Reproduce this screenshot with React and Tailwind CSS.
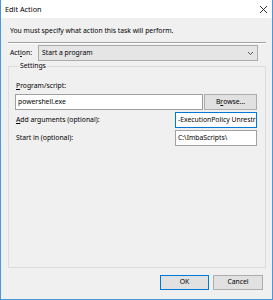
import React from "react";

// Task Scheduler "Edit Action" dialog, scaled down
const FONT = { fontFamily: '"Noto Sans", "Liberation Sans", sans-serif' };

function CloseIcon() {
  return (
    <svg width="9" height="9" viewBox="0 0 9 9">
      <path d="M1 1 L8 8 M8 1 L1 8" stroke="#333" strokeWidth="1" />
    </svg>
  );
}

function Chevron() {
  return (
    <svg width="7" height="5" viewBox="0 0 7 5">
      <path d="M1 1 L3.5 3.5 L6 1" stroke="#555" strokeWidth="1" fill="none" />
    </svg>
  );
}

function Btn({ children, primary }) {
  return (
    <button
      className={`h-[15px] bg-[#e1e1e1] text-[6.8px] leading-none text-black ${
        primary ? "w-[49px] border border-[#0078d7]" : "w-[50px] border border-[#adadad]"
      }`}
    >
      {children}
    </button>
  );
}

export default function App() {
  return (
    <div
      className="w-[273px] h-[300px] bg-[#f0f0f0] border-x border-b border-[#4a97dc] flex flex-col text-black"
      style={FONT}
    >
      {/* title bar */}
      <div className="h-[18px] bg-white flex items-center justify-between pl-[4px] pr-[4px]">
        <span className="text-[7.3px]">Edit Action</span>
        <CloseIcon />
      </div>

      <div className="flex-1 flex flex-col pl-[7px] pr-[6px] pb-[9px]">
        <div className="mt-[8px] h-[10px] leading-[10px] pl-[2px] text-[6.8px]">
          You must specify what action this task will perform.
        </div>
        <div className="mt-[6px] border-t border-[#a0a0a0] border-b border-b-white" />

        {/* action */}
        <div className="mt-[1px] flex items-center pr-[8px]">
          <span className="w-[30px] pl-[2px] text-[6.8px]">
            Act<u>i</u>on:
          </span>
          <div className="flex-1 h-[16px] bg-[#e5e5e5] border border-[#acacac] flex items-center justify-between pl-[3px] pr-[3px]">
            <span className="text-[6.8px]">Start a program</span>
            <Chevron />
          </div>
        </div>

        {/* settings group */}
        <fieldset className="flex-1 border border-[#dcdcdc] pl-[6px] pr-[8px] flex flex-col">
          <legend className="ml-[4px] px-[1px] text-[6.8px] leading-[10px]">Settings</legend>
          <div className="mt-[10px] text-[6.8px] leading-[10px] pl-[1px]">
            <u>P</u>rogram/script:
          </div>
          <div className="mt-[3px] flex gap-[1px]">
            <div className="flex-1 h-[16px] bg-white border border-[#a0a0a0] flex items-center pl-[2px] text-[6.8px]">
              powershell.exe
            </div>
            <div className="w-[53px] h-[16px] bg-[#e1e1e1] border border-[#adadad] flex items-center justify-center text-[6.8px]">
              B<u>r</u>owse...
            </div>
          </div>
          <div className="mt-[2px] flex items-center">
            <span className="flex-1 pl-[1px] text-[6.8px]">
              <u>A</u>dd arguments (optional):
            </span>
            <div className="w-[82px] h-[16px] bg-white border border-[#0078d7] flex items-center pl-[2px] text-[6.8px] overflow-hidden whitespace-nowrap">
              -ExecutionPolicy Unrestr
            </div>
          </div>
          <div className="mt-[2px] flex items-center">
            <span className="flex-1 pl-[1px] text-[6.8px]">Start in (optional):</span>
            <div className="w-[82px] h-[16px] bg-white border border-[#a0a0a0] flex items-center pl-[2px] text-[6.8px]">
              C:\ImbaScripts\
            </div>
          </div>
        </fieldset>

        <div className="mt-[7px] flex justify-end gap-[4px] pr-[3px]">
          <Btn primary>OK</Btn>
          <Btn>Cancel</Btn>
        </div>
      </div>
    </div>
  );
}
